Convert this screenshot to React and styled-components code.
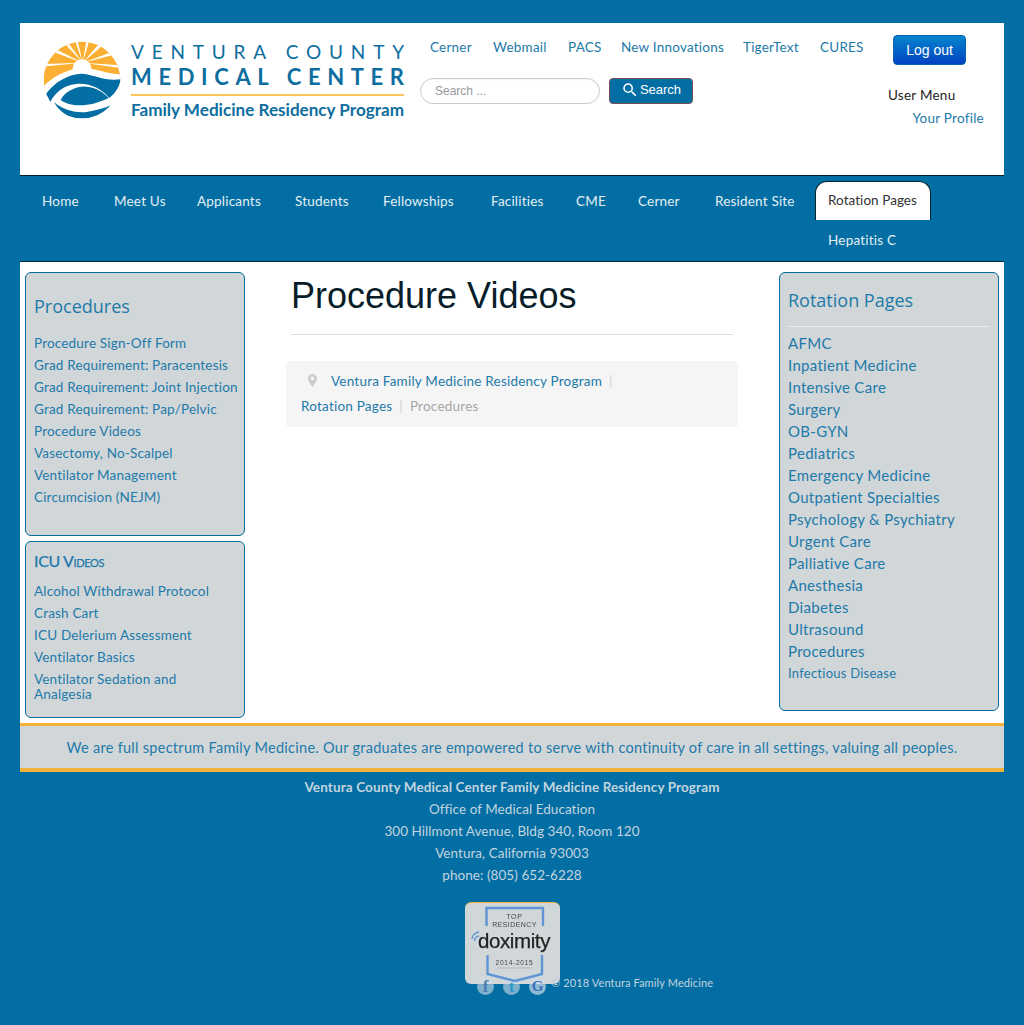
import React from "react";
import styled, { createGlobalStyle } from "styled-components";
import { MdSearch } from "react-icons/md";

const BLUE = "#036ea3";
const LINK = "#1d7aa9";
const BODY = `"Lato", "Open Sans", sans-serif`;

const Global = createGlobalStyle`
  html, body { margin: 0; padding: 0; background: ${BLUE}; }
  body { font-family: ${BODY}; font-size: 13.5px; }
  a { color: inherit; text-decoration: none; }
  * { box-sizing: border-box; }
`;

const Page = styled.div`
  width: 984px;
  margin: 0 20px;
  padding-top: 23px;
  height: 1025px;
  overflow: hidden;
`;

const Header = styled.header`
  display: flex;
  height: 152px;
  background: #fff;
`;

const LogoWrap = styled.div`
  width: 400px;
  padding: 17px 0 0 24px;
  flex: none;
`;

const Middle = styled.div`
  width: 453px;
  flex: none;
  display: flex;
  flex-direction: column;
`;

const TopLinks = styled.nav`
  display: flex;
  padding: 17px 0 0 10px;
  height: 55px;
`;

const TopLink = styled.a`
  width: ${(p) => p.$w}px;
  flex: none;
  color: ${LINK};
  font-size: 13.5px;
  line-height: 15px;
  letter-spacing: 0.22px;
  white-space: nowrap;
`;

const SearchRow = styled.form`
  display: flex;
  gap: 9px;
`;

const SearchInput = styled.input`
  width: 180px;
  height: 26px;
  border: 1px solid #ccc;
  border-radius: 13px;
  padding: 0 14px;
  font-family: "Liberation Sans", sans-serif;
  font-size: 12px;
  outline: none;
  box-shadow: inset 0 1px 1px rgba(0,0,0,.05);
  &::placeholder { color: #999; opacity: 1; }
`;

const SearchButton = styled.button`
  width: 84px;
  height: 26px;
  display: flex;
  align-items: center;
  justify-content: center;
  gap: 1px;
  padding: 0 0 3px;
  background: ${BLUE};
  border: 1px solid #7a4a55;
  border-radius: 4px;
  color: #fff;
  font-family: "Liberation Sans", sans-serif;
  font-size: 13px;
`;

const RightCol = styled.div`
  flex: 1;
  display: flex;
  flex-direction: column;
  padding: 12px 20px 0 0;
`;

const LogoutButton = styled.button`
  width: 73px;
  height: 30px;
  margin-left: 20px;
  border: 1px solid #0a62b0;
  border-radius: 4px;
  background: linear-gradient(#0585cc, #0142c2);
  color: #fff;
  font-family: "Liberation Sans", sans-serif;
  font-size: 14px;
  padding: 0;
`;

const MenuTitle = styled.div`
  margin: 22px 0 0 15px;
  color: #222;
  font-size: 13.5px;
  line-height: 17px;
  letter-spacing: 0.25px;
`;

const ProfileLink = styled.a`
  margin-top: 6px;
  text-align: right;
  color: ${LINK};
  font-size: 13.5px;
  line-height: 17px;
  letter-spacing: 0.25px;
`;

const MainNav = styled.nav`
  display: flex;
  flex-wrap: wrap;
  align-content: flex-start;
  height: 87px;
  padding: 5px 0 0 9px;
  background: ${BLUE};
  border-top: 1px solid #04202e;
  border-bottom: 1px solid #04202e;
`;

const NavItem = styled.a`
  width: ${(p) => p.$w}px;
  height: 39px;
  flex: none;
  padding-left: 13px;
  margin-left: ${(p) => p.$ml ?? 0}px;
  color: #e4eff5;
  font-size: 13.5px;
  line-height: 40px;
  letter-spacing: 0.2px;
  white-space: nowrap;
`;

const NavTab = styled.a`
  width: 116px;
  height: 39px;
  flex: none;
  padding-left: 12px;
  background: #fff;
  color: #333;
  border: 1px solid #04202e;
  border-bottom: none;
  border-radius: 12px 12px 0 0;
  font-size: 13.5px;
  line-height: 36px;
  letter-spacing: 0.05px;
  white-space: nowrap;
`;

const Main = styled.main`
  display: grid;
  grid-template-columns: 220px 1fr 220px;
  height: 461px;
  padding: 10px 5px 0;
  background: #fff;
`;

const SideCol = styled.aside`
  display: flex;
  flex-direction: column;
  gap: 5px;
`;

const Panel = styled.section`
  height: ${(p) => p.$h}px;
  padding: ${(p) => p.$pt}px 8px 0;
  background: #d1d6d9;
  border: 1px solid #036ea3;
  border-radius: 6px;
`;

const PanelTitle = styled.h3`
  margin: 0 0 ${(p) => p.$mb}px;
  color: ${LINK};
  font-family: "Open Sans", sans-serif;
  font-size: 18px;
  line-height: 24px;
  font-weight: 400;
`;

const SmallCapsTitle = styled.h3`
  margin: 0 0 8px;
  color: ${LINK};
  font-size: 16px;
  line-height: 24px;
  font-weight: 400;
  font-variant: small-caps;
  letter-spacing: -0.35px;
  -webkit-text-stroke: 0.25px ${LINK};
`;

const PanelRule = styled.hr`
  margin: 14px 0 6px;
  border: 0;
  border-top: 1px solid #e8ebec;
`;

const LinkList = styled.ul`
  list-style: none;
  margin: 0;
  padding: 0;
`;

const LinkItem = styled.li`
  padding: 3px 0 4px;
  color: ${LINK};
  font-size: ${(p) => p.$size ?? 13.5}px;
  line-height: 15px;
  letter-spacing: ${(p) => p.$ls ?? 0.18}px;
  white-space: nowrap;
`;

const Center = styled.div`
  padding: 0 41px;
`;

const Title = styled.h1`
  margin: 0 5px;
  height: 63px;
  padding-top: 4px;
  border-bottom: 1px solid #ddd;
  color: #071d29;
  font-family: "Liberation Sans", sans-serif;
  font-size: 36px;
  line-height: 40px;
  font-weight: 400;
`;

const Crumbs = styled.div`
  margin-top: 26px;
  height: 66px;
  padding: 8px 15px 0;
  background: #f5f5f5;
  border-radius: 4px;
  font-size: 13.5px;
  line-height: 25px;
  letter-spacing: 0.22px;
`;

const CrumbLine = styled.div`
  display: flex;
  align-items: center;
  height: 25px;
`;

const CrumbLink = styled.a`
  color: ${LINK};
`;

const CrumbSep = styled.span`
  color: #d0d0d0;
  margin: 0 7px;
`;

const CrumbCurrent = styled.span`
  color: #a5a5a5;
`;

const PinIcon = styled.svg`
  width: 9px;
  height: 13px;
  margin: -3px 14px 0 7px;
  flex: none;
`;

const Banner = styled.div`
  height: 49px;
  display: flex;
  align-items: center;
  justify-content: center;
  background: #d1d6d9;
  border-top: 3px solid #f2b23a;
  border-bottom: 4px solid #f2b23a;
  color: ${LINK};
  font-size: 14.5px;
  letter-spacing: 0.28px;
`;

const Footer = styled.footer`
  color: #c2d4df;
  text-align: center;
  padding-top: 4px;
`;

const FootLine = styled.div`
  font-size: 13.5px;
  line-height: 22px;
  letter-spacing: ${(p) => (p.$bold ? 0.12 : 0.05)}px;
  font-weight: ${(p) => (p.$bold ? 700 : 400)};
`;

const Badge = styled.div`
  width: 95px;
  height: 82px;
  margin: 16px auto 0;
  overflow: hidden;
  background: #d1d6d9;
  border-top: 1px solid #f2b23a;
  border-radius: 6px;
`;

const SocialRow = styled.div`
  display: flex;
  align-items: center;
  margin: -6px 0 0 457px;
`;

const Social = styled.span`
  width: 17px;
  height: 17px;
  margin-right: 9px;
  border-radius: 50%;
  display: flex;
  align-items: center;
  justify-content: center;
  background: rgba(205, 220, 232, ${(p) => p.$a});
  color: ${(p) => p.$c};
  font-family: "Liberation Serif", serif;
  font-size: ${(p) => p.$size}px;
  font-weight: 700;
  line-height: 17px;
`;

const Copyright = styled.span`
  margin: -8px 0 0 -4px;
  font-size: 11px;
  letter-spacing: 0.12px;
  color: #c2d4df;
`;

const Emblem = () => (
  <g>
    <defs>
      <clipPath id="disc"><circle cx="126" cy="132" r="115" /></clipPath>
    </defs>
    <g clipPath="url(#disc)">
      <rect x="0" y="0" width="255" height="165" fill="#fbb034" />
      <path d="M128 80 L104 10 L112 10 Z M128 80 L140 10 L149 10 Z M128 80 L72 20 L80 14 Z M128 80 L180 20 L190 26 Z M128 80 L46 50 L52 42 Z M128 80 L210 50 L216 58 Z M128 80 L10 92 L12 84 Z M128 80 L240 88 L242 96 Z" fill="#fff" />
      <circle cx="126" cy="98" r="28" fill="#fff" />
      <path d="M0 160 C40 118 90 96 130 96 C170 96 205 118 255 114 L255 175 L0 205 Z" fill="#fff" />
      <rect x="0" y="160" width="255" height="110" fill="#fff" />
      <path d="M14 180 C42 136 95 110 132 114 C168 118 192 136 242 130 C238 154 226 172 208 186 C186 160 150 140 108 144 C72 148 44 170 30 200 Z" fill="#036ea3" />
      <path d="M62 192 C76 164 112 150 140 152 C168 154 192 170 206 186 C176 200 150 208 118 208 C96 208 76 202 62 192 Z" fill="#036ea3" />
      <path d="M42 198 C68 222 110 232 140 228 C165 224 190 218 214 208 C196 236 165 250 126 250 C90 250 58 228 42 198 Z" fill="#036ea3" />
    </g>
  </g>
);

const Logo = () => (
  <svg width="362" height="84" viewBox="0 0 362 84" role="img" aria-label="Ventura County Medical Center">
    <g transform="translate(-4,-4) scale(0.3333)"><Emblem /></g>
    <text x="87" y="18.5" textLength="273" lengthAdjust="spacing" fill="#0d6e9f" fontFamily="Lato, sans-serif" fontSize="19">VENTURA COUNTY</text>
    <text x="87" y="45" textLength="273" lengthAdjust="spacing" fill="#0d6e9f" fontFamily="Lato, sans-serif" fontWeight="700" fontSize="22">MEDICAL CENTER</text>
    <rect x="87" y="54" width="273" height="2" fill="#fcc55c" />
    <text x="87" y="75.5" textLength="273" lengthAdjust="spacingAndGlyphs" fill="#0d6e9f" fontFamily="Lato, sans-serif" fontWeight="700" fontSize="17">Family Medicine Residency Program</text>
  </svg>
);

const BadgeArt = styled.svg`
  display: block;
  filter: blur(0.3px);
`;

const DoximityBadge = () => (
  <BadgeArt width="95" height="81" viewBox="0 0 95 81" role="img" aria-label="Top Residency Doximity 2014-2015">
    <path d="M21.5 23 V5 H78 V23" fill="none" stroke="#5f95d4" strokeWidth="2.4" />
    <path d="M22.5 52 V71 L50 78 L77 71 V52" fill="none" stroke="#5f95d4" strokeWidth="2.4" />
    <text x="49.5" y="15.5" textAnchor="middle" fontFamily="Liberation Sans, sans-serif" fontSize="7" letterSpacing="0.8" fill="#444">TOP</text>
    <text x="49.5" y="24" textAnchor="middle" fontFamily="Liberation Sans, sans-serif" fontSize="7" letterSpacing="0.4" fill="#444">RESIDENCY</text>
    <text x="49" y="45" textAnchor="middle" fontFamily="Liberation Sans, sans-serif" fontSize="20.5" letterSpacing="-0.4" stroke="#222" strokeWidth="0.25" fill="#222">doximity</text>
    <path d="M7 36 A8 8 0 0 1 14 29 M9.5 38 A5 5 0 0 1 14 33" fill="none" stroke="#5f95d4" strokeWidth="1.5" />
    <text x="49.5" y="62" textAnchor="middle" fontFamily="Liberation Sans, sans-serif" fontSize="6.6" letterSpacing="0.7" fill="#444">2014-2015</text>
    <path d="M32 65 H67" stroke="#a8b0b5" strokeWidth="0.8" />
  </BadgeArt>
);

const topLinks = [["Cerner", 63], ["Webmail", 75], ["PACS", 53], ["New Innovations", 122], ["TigerText", 77], ["CURES", 50]];
const navItems = [["Home", 72], ["Meet Us", 83], ["Applicants", 98], ["Students", 88], ["Fellowships", 108], ["Facilities", 85], ["CME", 62], ["Cerner", 77], ["Resident Site", 113]];
const procedures = ["Procedure Sign-Off Form", "Grad Requirement: Paracentesis", "Grad Requirement: Joint Injection", "Grad Requirement: Pap/Pelvic", "Procedure Videos", "Vasectomy, No-Scalpel", "Ventilator Management", "Circumcision (NEJM)"];
const icu = ["Alcohol Withdrawal Protocol", "Crash Cart", "ICU Delerium Assessment", "Ventilator Basics"];
const rotations = ["AFMC", "Inpatient Medicine", "Intensive Care", "Surgery", "OB-GYN", "Pediatrics", "Emergency Medicine", "Outpatient Specialties", "Psychology & Psychiatry", "Urgent Care", "Palliative Care", "Anesthesia", "Diabetes", "Ultrasound", "Procedures"];

export default function App() {
  return (
    <Page>
      <Global />
      <Header>
        <LogoWrap><Logo /></LogoWrap>
        <Middle>
          <TopLinks>
            {topLinks.map(([t, w]) => <TopLink key={t} $w={w} href="#">{t}</TopLink>)}
          </TopLinks>
          <SearchRow>
            <SearchInput placeholder="Search ..." />
            <SearchButton type="button"><MdSearch size={18} />Search</SearchButton>
          </SearchRow>
        </Middle>
        <RightCol>
          <LogoutButton>Log out</LogoutButton>
          <MenuTitle>User Menu</MenuTitle>
          <ProfileLink href="#">Your Profile</ProfileLink>
        </RightCol>
      </Header>

      <MainNav>
        {navItems.map(([t, w]) => <NavItem key={t} $w={w} href="#">{t}</NavItem>)}
        <NavTab href="#">Rotation Pages</NavTab>
        <NavItem $w={116} $ml={786} href="#">Hepatitis C</NavItem>
      </MainNav>

      <Main>
        <SideCol>
          <Panel $h={264} $pt={21}>
            <PanelTitle $mb={15}>Procedures</PanelTitle>
            <LinkList>{procedures.map((t) => <LinkItem key={t}>{t}</LinkItem>)}</LinkList>
          </Panel>
          <Panel $h={177} $pt={7}>
            <SmallCapsTitle>ICU Videos</SmallCapsTitle>
            <LinkList>
              {icu.map((t) => <LinkItem key={t}>{t}</LinkItem>)}
              <LinkItem>Ventilator Sedation and<br />Analgesia</LinkItem>
            </LinkList>
          </Panel>
        </SideCol>

        <Center>
          <Title>Procedure Videos</Title>
          <Crumbs>
            <CrumbLine>
              <PinIcon viewBox="0 0 9 13"><path fillRule="evenodd" d="M4.5 0C2 0 0 2 0 4.5 0 7.5 4.5 13 4.5 13S9 7.5 9 4.5C9 2 7 0 4.5 0Zm0 6.2a1.8 1.8 0 1 1 0-3.6 1.8 1.8 0 0 1 0 3.6Z" fill="#ccc" /></PinIcon>
              <CrumbLink href="#">Ventura Family Medicine Residency Program</CrumbLink>
              <CrumbSep>|</CrumbSep>
            </CrumbLine>
            <CrumbLine>
              <CrumbLink href="#">Rotation Pages</CrumbLink>
              <CrumbSep>|</CrumbSep>
              <CrumbCurrent>Procedures</CrumbCurrent>
            </CrumbLine>
          </Crumbs>
        </Center>

        <SideCol>
          <Panel $h={439} $pt={15}>
            <PanelTitle $mb={0}>Rotation Pages</PanelTitle>
            <PanelRule />
            <LinkList>
              {rotations.map((t) => <LinkItem key={t} $size={15} $ls={0.3}>{t}</LinkItem>)}
              <LinkItem $size={13} $ls={0.25}>Infectious Disease</LinkItem>
            </LinkList>
          </Panel>
        </SideCol>
      </Main>

      <Banner>We are full spectrum Family Medicine. Our graduates are empowered to serve with continuity of care in all settings, valuing all peoples.</Banner>

      <Footer>
        <FootLine $bold>Ventura County Medical Center Family Medicine Residency Program</FootLine>
        <FootLine>Office of Medical Education</FootLine>
        <FootLine>300 Hillmont Avenue, Bldg 340, Room 120</FootLine>
        <FootLine>Ventura, California 93003</FootLine>
        <FootLine>phone: (805) 652-6228</FootLine>
        <Badge><DoximityBadge /></Badge>
        <SocialRow>
          <Social $a={0.6} $c="#4a7fb0" $size={17}>f</Social>
          <Social $a={0.6} $c="#2b97c6" $size={17}>t</Social>
          <Social $a={0.7} $c="#3a6fbb" $size={15}>G</Social>
          <Copyright>© 2018 Ventura Family Medicine</Copyright>
        </SocialRow>
      </Footer>
    </Page>
  );
}
